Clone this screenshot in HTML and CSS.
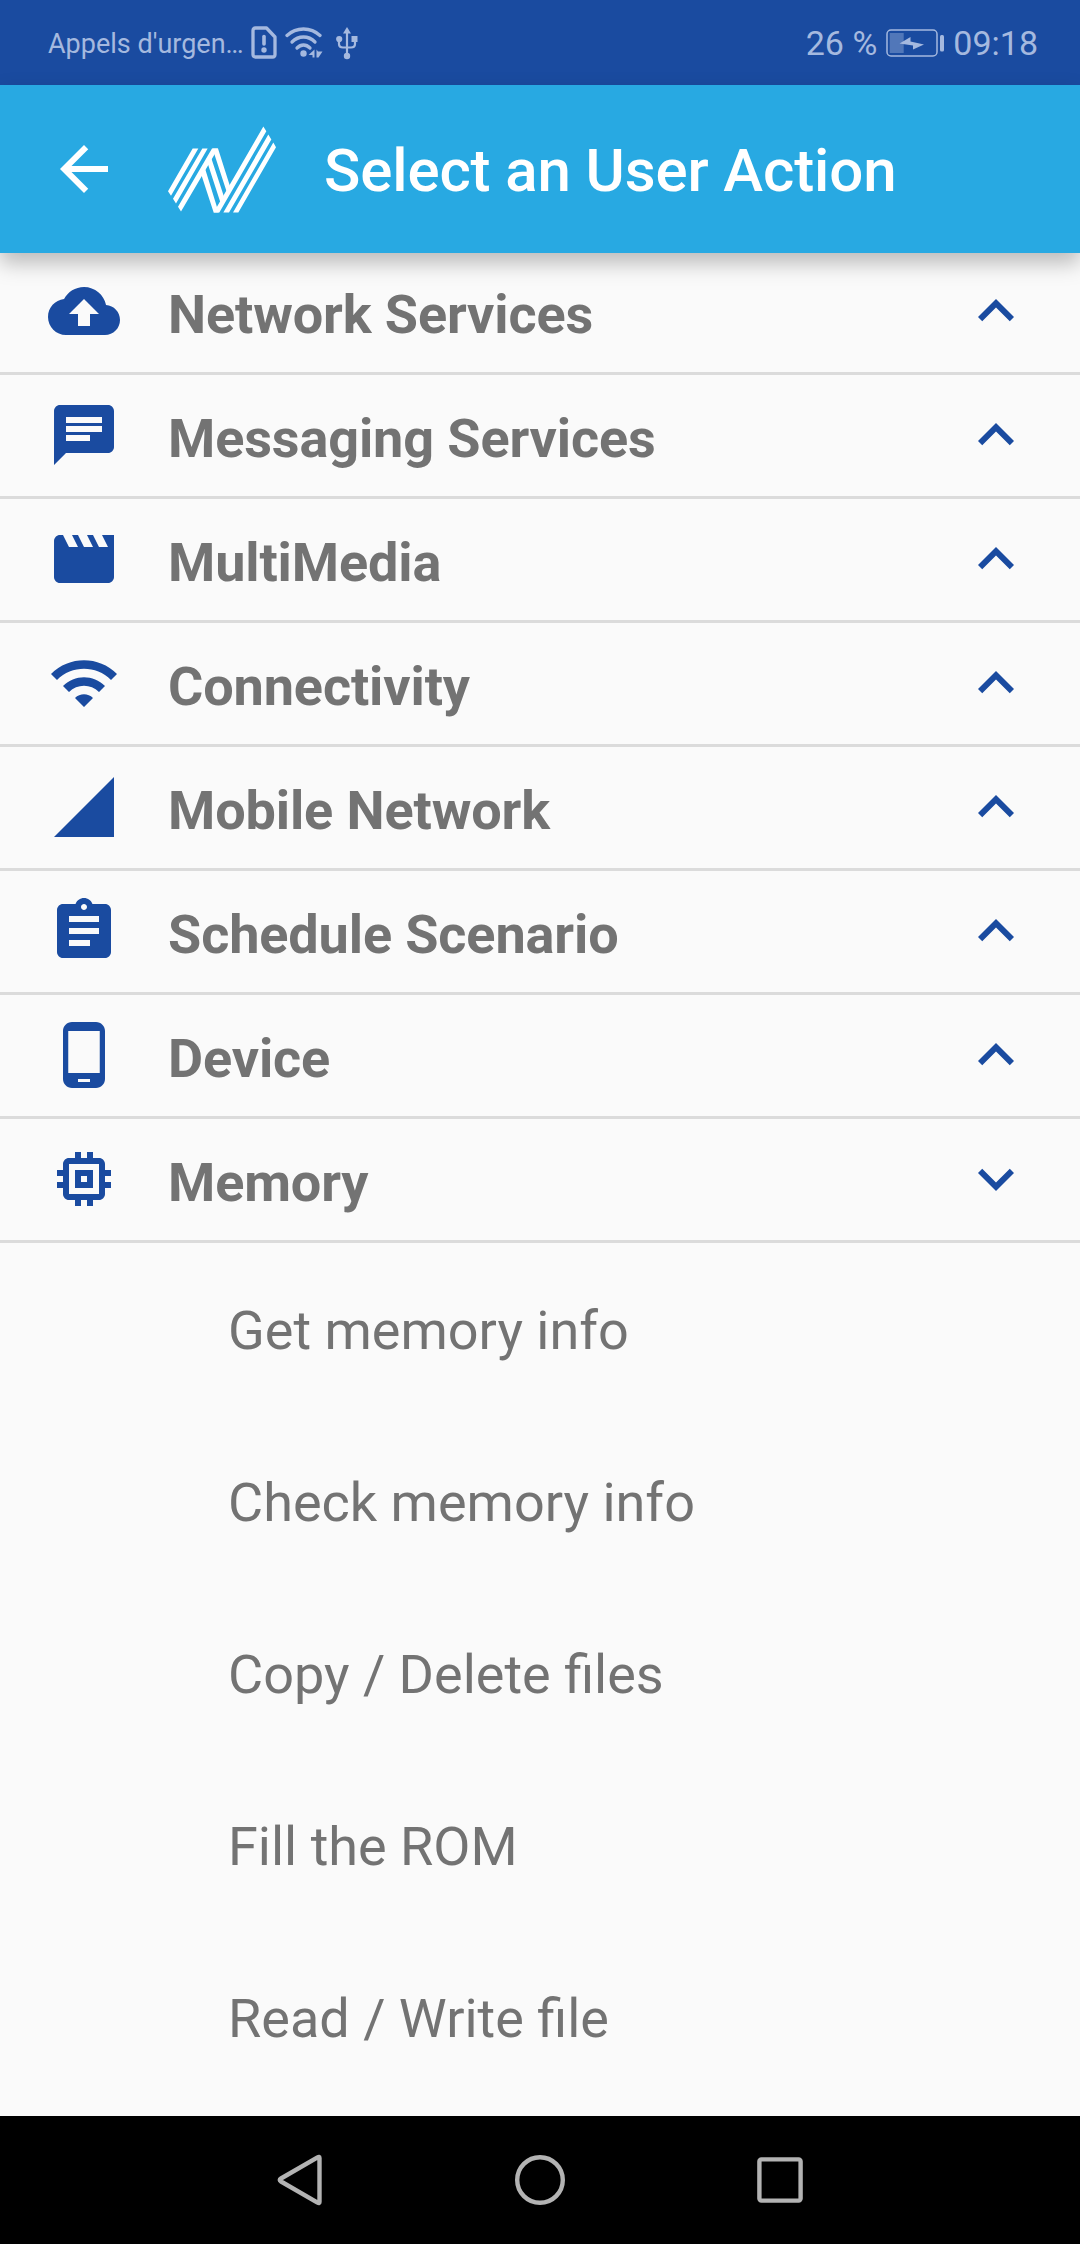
FILE: index.html
```html
<!DOCTYPE html>
<html lang="en">
<head>
<meta charset="utf-8">
<title>Select an User Action</title>
<link rel="stylesheet" href="styles.css">
</head>
<body>
<div class="screen">
  <div class="status">
    <span class="carrier">Appels d'urgen…</span>
    <svg class="sim" width="26" height="34" viewBox="0 0 26 34"><path d="M4.500 2H15.500L24 11V28.500Q24 31 21.500 31H4.500Q2 31 2 28.500V4.500Q2 2 4.500 2Z" fill="none" stroke="currentColor" stroke-width="3.300" stroke-linejoin="round"/><path d="M13 10.500V18" stroke="currentColor" stroke-width="3.600" stroke-linecap="round"/><circle cx="13" cy="24" r="2.700" fill="currentColor"/></svg>
    <svg class="wifi" width="38" height="32" viewBox="0 0 38 32"><g fill="none" stroke="currentColor" stroke-width="3.300" stroke-linecap="round"><path d="M2 8.500Q9 2 18.500 2T35 8.500"/><path d="M7 15Q12 10 18.500 10T30 15"/><path d="M12 21Q15 18 18.500 18T25 21"/></g><circle cx="18.500" cy="26.500" r="3.200" fill="currentColor"/><path d="M29.500 22.500V30.500H27.500V28H23.500ZM31.500 22.500L33 24.500H37.500L33.500 30.500H31.500Z" fill="currentColor"/></svg>
    <svg class="usb" width="22" height="33" viewBox="0 0 22 33"><path d="M11 5V27M3 13V17Q3 20.500 7 20.500H15Q19 20.500 19 17V13" fill="none" stroke="currentColor" stroke-width="2.200"/><path d="M11 0L15 6.500H7Z" fill="currentColor"/><circle cx="3.200" cy="12" r="3.100" fill="currentColor"/><path d="M15.500 9H21.500V15H15.500Z" fill="currentColor"/><circle cx="11" cy="29" r="3.200" fill="currentColor"/></svg>
    <span class="percent">26 %</span>
    <svg class="battery" width="58" height="28" viewBox="0 0 58 28"><rect x="1" y="1" width="50" height="26" rx="4" fill="none" stroke="currentColor" stroke-width="1.500"/><rect x="3.700" y="4" width="14" height="20" fill="currentColor" opacity=".4"/><path d="M13.500 14.500L24.500 8V12.500L38 15.500 27 20.500V16.500Z" fill="currentColor"/><rect x="54" y="6" width="4" height="16.500" rx="1.500" fill="currentColor"/></svg>
    <span class="clock">09:18</span>
  </div>

  <header class="appbar">
    <svg class="back" viewBox="0 0 24 24"><path d="M20 11H7.830l5.590-5.590L12 4l-8 8 8 8 1.410-1.410L7.830 13H20z"/></svg>
    <svg class="logo" viewBox="504 137 324 260">
      <path d="M578 204H595L513 346 504 332ZM607 204H623L528 369 519 355ZM636 204H654L543 393 534 379Z"/>
      <path d="M790 138L799 152 658 396H641ZM805 162L814 177 687 396H670ZM820 186L828 200 715 396H699Z"/>
      <path d="M637.500 204H654L690 317 682 340ZM619 236L630 221 674 355 663 371ZM601 274L613 257 656 396H641Z"/>
    </svg>
    <h1 class="title">Select an User Action</h1>
  </header>

  <main class="list">
    <div class="row"><svg viewBox="0 0 24 24"><path d="M19.350 10.040C18.670 6.590 15.640 4 12 4 9.110 4 6.600 5.640 5.350 8.040 2.340 8.360 0 10.910 0 14c0 3.310 2.690 6 6 6h13c2.760 0 5-2.240 5-5 0-2.640-2.050-4.780-4.650-4.960zM14 13v4h-4v-4H7l5-5 5 5h-3z"/></svg><span class="label">Network Services</span><svg viewBox="0 0 24 24"><path d="M12 8l-6 6 1.410 1.410L12 10.830l4.590 4.580L18 14z"/></svg></div>
    <div class="row"><svg viewBox="0 0 24 24"><path d="M20 2H4c-1.100 0-1.990.9-1.990 2L2 22l4-4h14c1.100 0 2-.9 2-2V4c0-1.100-.9-2-2-2zM6 9h12v2H6V9zm8 5H6v-2h8v2zm4-6H6V6h12v2z"/></svg><span class="label">Messaging Services</span><svg viewBox="0 0 24 24"><path d="M12 8l-6 6 1.410 1.410L12 10.830l4.590 4.580L18 14z"/></svg></div>
    <div class="row"><svg viewBox="0 0 24 24"><path d="M18 4l2 4h-3l-2-4h-2l2 4h-3l-2-4H8l2 4H7L5 4H4c-1.100 0-1.990.9-1.990 2L2 18c0 1.100.9 2 2 2h16c1.100 0 2-.9 2-2V4h-4z"/></svg><span class="label">MultiMedia</span><svg viewBox="0 0 24 24"><path d="M12 8l-6 6 1.410 1.410L12 10.830l4.590 4.580L18 14z"/></svg></div>
    <div class="row"><svg viewBox="0 0 24 24"><path d="M1 9l2 2c4.970-4.970 13.030-4.970 18 0l2-2C16.930 2.930 7.080 2.930 1 9zm8 8l3 3 3-3c-1.650-1.660-4.340-1.660-6 0zm-4-4l2 2c2.760-2.760 7.240-2.760 10 0l2-2C15.140 9.140 8.870 9.140 5 13z"/></svg><span class="label">Connectivity</span><svg viewBox="0 0 24 24"><path d="M12 8l-6 6 1.410 1.410L12 10.830l4.590 4.580L18 14z"/></svg></div>
    <div class="row"><svg viewBox="0 0 24 24"><path d="M2 22h20V2z"/></svg><span class="label">Mobile Network</span><svg viewBox="0 0 24 24"><path d="M12 8l-6 6 1.410 1.410L12 10.830l4.590 4.580L18 14z"/></svg></div>
    <div class="row"><svg viewBox="0 0 24 24"><path d="M19 3h-4.180C14.400 1.840 13.300 1 12 1c-1.300 0-2.400.84-2.820 2H5c-1.100 0-2 .9-2 2v14c0 1.100.9 2 2 2h14c1.100 0 2-.9 2-2V5c0-1.100-.9-2-2-2zm-7 0c.55 0 1 .45 1 1s-.45 1-1 1-1-.45-1-1 .45-1 1-1zm2 14H7v-2h7v2zm3-4H7v-2h10v2zm0-4H7V7h10v2z"/></svg><span class="label">Schedule Scenario</span><svg viewBox="0 0 24 24"><path d="M12 8l-6 6 1.410 1.410L12 10.830l4.590 4.580L18 14z"/></svg></div>
    <div class="row"><svg viewBox="0 0 24 24"><path d="M16 1H8C6.340 1 5 2.340 5 4v16c0 1.660 1.340 3 3 3h8c1.660 0 3-1.340 3-3V4c0-1.660-1.340-3-3-3zm-2 20h-4v-1h4v1zm3.250-3H6.750V4h10.500v14z"/></svg><span class="label">Device</span><svg viewBox="0 0 24 24"><path d="M12 8l-6 6 1.410 1.410L12 10.830l4.590 4.580L18 14z"/></svg></div>
    <div class="row"><svg viewBox="0 0 24 24"><path d="M15 9H9v6h6V9zm-2 4h-2v-2h2v2zm8-2V9h-2V7c0-1.100-.9-2-2-2h-2V3h-2v2h-2V3H9v2H7c-1.100 0-2 .9-2 2v2H3v2h2v2H3v2h2v2c0 1.100.9 2 2 2h2v2h2v-2h2v2h2v-2h2c1.100 0 2-.9 2-2v-2h2v-2h-2v-2h2zm-4 6H7V7h10v10z"/></svg><span class="label">Memory</span><svg viewBox="0 0 24 24"><path d="M16.590 8.590L12 13.170 7.410 8.590 6 10l6 6 6-6z"/></svg></div>
    <div class="items">
      <div class="item">Get memory info</div>
      <div class="item">Check memory info</div>
      <div class="item">Copy / Delete files</div>
      <div class="item">Fill the ROM</div>
      <div class="item">Read / Write file</div>
    </div>
  </main>

  <nav class="navbar">
    <svg viewBox="0 0 56 56"><path d="M47.500 6V50Q47.500 52 45.500 50.500L9 29.500Q6.500 28 9 26.500L45.500 5.500Q47.500 4 47.500 6Z"/></svg>
    <svg viewBox="0 0 56 56"><circle cx="28" cy="28" r="22.800"/></svg>
    <svg viewBox="0 0 56 56"><rect x="7.400" y="7.400" width="41.200" height="41.200" rx="2"/></svg>
  </nav>
</div>
</body>
</html>
```
FILE: styles.css
```css
body {
  margin: 0;
  font-family: Roboto, "Noto Sans", sans-serif;
}

.screen {
  display: flex;
  flex-direction: column;
  width: 1080px;
  height: 2244px;
  overflow: hidden;
  background: #fafafa;
}

.status {
  display: flex;
  align-items: center;
  box-sizing: border-box;
  flex: 0 0 85px;
  padding: 1px 42px 0 48px;
  background: #1a4ba0;
  color: #a5b9df;
  white-space: nowrap;
}

.carrier {
  width: 195px;
  padding-top: 1px;
  font-size: 27px;
}

.sim { margin-left: 8px; }
.wifi { margin-left: 8px; }
.usb { margin-left: 13px; }

.percent {
  margin-left: auto;
  font-size: 34px;
}

.battery { margin: 0 9px 0 9px; }

.clock { font-size: 34px; }

.appbar {
  position: relative;
  display: flex;
  align-items: center;
  flex: 0 0 168px;
  padding-left: 48px;
  background: #28a9e2;
  box-shadow: 0 10px 20px rgba(0, 0, 0, 0.26);
}

.back {
  width: 72px;
  height: 72px;
  fill: #fff;
}

.logo {
  width: 108px;
  height: 87px;
  margin-left: 48px;
  fill: #fff;
}

.title {
  margin: 4px 0 0 48px;
  color: #fff;
  font-size: 60px;
  font-weight: 500;
  letter-spacing: -0.12px;
  line-height: 72px;
}

.list {
  flex: 1;
  margin-top: -2px;
}

.row {
  display: flex;
  align-items: flex-start;
  box-sizing: border-box;
  height: 124px;
  padding: 24px 48px 0;
  border-bottom: 3px solid #dbdbdb;
}

.row svg {
  width: 72px;
  height: 72px;
  fill: #1a4ba0;
}

.label {
  flex: 1;
  padding: 8px 0 0 48px;
  color: #737373;
  font-size: 54px;
  font-weight: 700;
  letter-spacing: -0.12px;
  line-height: 64px;
}

.items {
  padding: 2px 0 0 228px;
}

.item {
  color: #737373;
  font-size: 54px;
  line-height: 172px;
}

.navbar {
  display: flex;
  align-items: center;
  justify-content: center;
  gap: 184px;
  flex: 0 0 128px;
  background: #000;
}

.navbar svg {
  width: 56px;
  height: 56px;
  fill: none;
  stroke: #b3b3b3;
  stroke-width: 4.400px;
}
```
